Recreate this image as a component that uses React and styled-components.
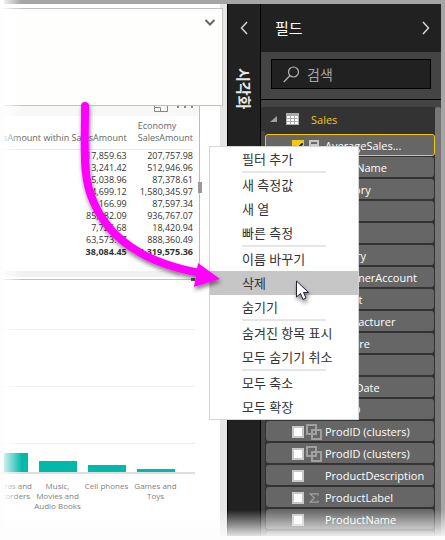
import React from "react";
import styled, { createGlobalStyle, css } from "styled-components";

const Global = createGlobalStyle`
  *, *::before, *::after { box-sizing: border-box; }
  body { margin: 0; background: #fdfdfd; font-family: "Open Sans", "Noto Sans CJK KR", sans-serif; }
  button, input { font: inherit; color: inherit; border: 0; padding: 0; margin: 0; }
  h1, h2 { margin: 0; font-weight: 400; }
`;

const Page = styled.main`
  position: relative;
  min-height: 100vh;
  padding: 0 0 4px 4px;
  overflow: hidden;
`;

const Shell = styled.div`
  display: grid;
  grid-template-columns: minmax(0, 1fr) 34px 180px;
  height: calc(100vh - 4px);
  padding: 4px 4px 0 0;
  background: #a5a5a5;
  overflow: hidden;
`;

const Canvas = styled.section`
  position: relative;
  min-width: 0;
  padding-right: 7px;
  background: #e6e6e6;
`;

const FormulaPanel = styled.div`
  position: absolute;
  z-index: 1;
  inset: 4px 4px auto 0;
  height: 98px;
  display: flex;
  justify-content: flex-end;
  align-items: flex-start;
  padding: 9px 6px;
  background: #fefffd;
  border: 1px solid #c2c2c2;
  border-left: 0;
`;

const IconButton = styled.button`
  display: grid;
  place-items: center;
  background: none;
  color: ${(p) => p.$color || "#666"};
`;

const Report = styled.div`
  height: 100%;
  padding-top: 98px;
  background: #fff;
`;

const Visual = styled.div`
  position: relative;
  display: flex;
  flex-direction: column;
  margin-right: 20px;
  height: 168px;
  border-right: 1px solid #bdbdbd;
`;

const ResizeGrip = styled.span`
  position: absolute;
  top: 80px;
  right: -3px;
  width: 4px;
  height: 11px;
  background: #999;
`;

const VisualBar = styled.div`
  display: flex;
  justify-content: flex-end;
  gap: 9px;
  height: 14px;
  padding-right: 6px;
  background: #f8f8f8;
`;

const Table = styled.table`
  align-self: flex-end;
  margin-right: 6px;
  border-collapse: collapse;
  font-size: 9px;
  line-height: 12px;
  color: #333;
  white-space: nowrap;

  th, td { padding: 0; text-align: right; font-weight: 400; }
  th { padding: 4px 0 5px; color: #666; vertical-align: bottom; border-bottom: 1px solid #e8e8e8; }
  th:last-child { text-align: left; padding-left: 11px; }
  tfoot td { font-weight: 700; }
`;

const ScrollTrack = styled.div`
  height: 6px;
  margin-right: 40px;
  margin-top: 1px;
  background: #f1f1f1;
`;

const VisualEdge = styled.div`
  display: flex;
  justify-content: flex-end;
  height: 3px;
  margin: 1px 25px 0 0;
  background: linear-gradient(#c0c0c0, #c0c0c0) no-repeat 0 1px / 100% 1px;
  &::after { content: ""; width: 4px; background: #555; }
`;

const Chart = styled.div`
  display: flex;
  flex-direction: column;
  margin-right: 25px;
`;

const Plot = styled.div`
  display: flex;
  flex-direction: column;
  padding-top: 48px;
  border-bottom: 2px solid #dedede;
`;

const GridLine = styled.div`
  height: 57px;
  border-top: 1px solid #f0f0f0;
`;

const Bars = styled.div`
  display: grid;
  grid-template-columns: 24px repeat(3, 38px);
  column-gap: 11px;
  align-items: end;
  height: 29px;
  border-top: 1px solid #ececec;
`;

const Bar = styled.div`
  background: #01b8aa;
`;

const Labels = styled.div`
  display: grid;
  grid-template-columns: 29px repeat(3, 49px);
  justify-content: start;
  padding-top: 7px;
  color: #808080;
  font-size: 8px;
  line-height: 10px;
  text-align: center;
  span { display: flex; justify-content: center; white-space: pre; }
  span:first-child { justify-content: flex-end; padding-right: 1px; }
`;

const Visualizations = styled.aside`
  display: flex;
  flex-direction: column;
  align-items: center;
  gap: 33px;
  padding-top: 17px;
  background: #212121;
  border-left: 1px solid #000;
  border-right: 1px solid #000;
  color: #e6e6e6;
`;

const SideTitle = styled.h2`
  writing-mode: vertical-rl;
  text-orientation: sideways;
  font-size: 15px;
  font-weight: 700;
  line-height: 20px;
`;

const Fields = styled.aside`
  display: flex;
  flex-direction: column;
  min-width: 0;
  min-height: 0;
  background: #444;
  color: #fff;
`;

const FieldsHead = styled.header`
  flex: none;
  display: flex;
  align-items: center;
  justify-content: space-between;
  height: 48px;
  padding: 0 11px 0 14px;
  background: #212121;
  h1 { font-size: 15px; line-height: 24px; }
`;

const SearchArea = styled.div`
  flex: none;
  padding: 7px 10px 10px;
  border-bottom: 1px solid #000;
`;

const SearchBox = styled.label`
  display: flex;
  align-items: center;
  gap: 7px;
  height: 30px;
  padding-left: 11px;
  background: #212121;
  border: 1px solid #000;
  color: #b5b5b5;
  input { flex: 1; min-width: 0; background: none; outline: 0; font-size: 14px; }
  input::placeholder { color: #a6a6a6; opacity: 1; }
`;

const ListArea = styled.div`
  flex: 1;
  display: grid;
  grid-template-columns: minmax(0, 1fr) 6px;
  min-height: 0;
  padding-top: 7px;
`;

const ListBody = styled.div`
  min-height: 0;
  overflow: hidden;
`;

const ScrollThumb = styled.div`
  background: #767676;
  border-radius: 3px 3px 0 0;
`;

const GroupRow = styled.button`
  display: flex;
  align-items: center;
  width: 100%;
  height: 24px;
  padding-left: 9px;
  background: #333;
  color: #f2c811;
  font-size: 11px;
  svg:nth-of-type(2) { margin: 0 12px 0 9px; }
`;

const FieldList = styled.ul`
  display: grid;
  gap: 2px;
  margin: 0 0 0 4px;
  padding: 3px 0 0;
  background: #333;
  list-style: none;
`;

const Field = styled.li`
  label {
    display: flex;
    align-items: center;
    height: 20px;
    margin: 0 1px;
    padding: 2px 0 0 26px;
    background: #666;
    border-radius: 3px;
    font-size: 11px;
    line-height: 18px;
    white-space: nowrap;
  }
  ${(p) => p.$selected && css`
    label { height: 22px; margin: 0 0 -1px; border: 1px solid #f2c811; }
  `}
`;

const Check = styled.input`
  appearance: none;
  flex: none;
  display: grid;
  place-items: center;
  width: 12px;
  height: 12px;
  background: #fff;
  &:not(:checked) { border: 2px solid #c8c8c8; }
  &:checked { background: #f2c811; }
  &:checked::after {
    content: "";
    width: 5px;
    height: 9px;
    margin-bottom: 2px;
    border: solid #222;
    border-width: 0 2px 2px 0;
    transform: rotate(45deg);
  }
`;

const Glyph = styled.span`
  flex: none;
  display: grid;
  place-items: center;
  width: 21px;
  padding-right: 2px;
  color: #a0a0a0;
`;

const Menu = styled.div`
  position: absolute;
  z-index: 4;
  top: 146px;
  left: 209px;
  width: 150px;
  background: #fff;
  border: 1px solid #d5d5d5;
`;

const MenuItem = styled.button`
  display: block;
  width: 100%;
  height: 24px;
  padding-left: 32px;
  background: ${(p) => (p.$active ? "#c6c6c6" : "transparent")};
  color: #333;
  font-size: 13px;
  line-height: 24px;
  text-align: left;
  white-space: nowrap;
`;

const Separator = styled.hr`
  width: 84px;
  height: 2px;
  margin: 0 0 0 32px;
  border: 0;
  background: #e6e6e6;
`;

const Annotation = styled.svg`
  position: absolute;
  z-index: 5;
  top: 0;
  left: 0;
  pointer-events: none;
`;

const BottomFade = styled.div`
  position: absolute;
  z-index: 3;
  inset: auto 0 4px 0;
  height: 26px;
  background: linear-gradient(rgba(253, 253, 253, 0), rgba(253, 253, 253, 0.88));
`;

const LeftFade = styled.div`
  position: absolute;
  z-index: 3;
  inset: 0 auto 4px 4px;
  width: 18px;
  background: linear-gradient(90deg, rgba(255, 255, 255, 0.8), rgba(255, 255, 255, 0));
`;

const rows = [
  ["17,859.63", "207,757.98"],
  ["13,241.42", "512,946.96"],
  ["5,038.96", "87,378.61"],
  ["4,699.12", "1,580,345.97"],
  ["166.99", "87,597.34"],
  ["85,182.09", "936,767.07"],
  ["7,726.68", "18,420.94"],
  ["63,573.17", "888,360.49"],
];

const fields = [
  { name: "AverageSales...", icon: "calc", selected: true },
  { name: "BrandName" },
  { name: "Category" },
  { name: "Class" },
  { name: "Color" },
  { name: "Country" },
  { name: "CustomerAccount" },
  { name: "Default" },
  { name: "Manufacturer" },
  { name: "Measure" },
  { name: "Model" },
  { name: "OrderDate" },
  { name: "ProdID" },
  { name: "ProdID (clusters)", icon: "cluster" },
  { name: "ProdID (clusters)", icon: "cluster" },
  { name: "ProductDescription" },
  { name: "ProductLabel", icon: "sum" },
  { name: "ProductName" },
  { name: "" },
];

const menu = [
  ["필터 추가"],
  ["새 측정값", "새 열", "빠른 측정"],
  ["이름 바꾸기", "삭제", "숨기기"],
  ["숨겨진 항목 표시", "모두 숨기기 취소"],
  ["모두 축소", "모두 확장"],
];

function Chevron({ d, w, h, sw = 1 }) {
  return (
    <svg width={w} height={h} viewBox={`0 0 ${w} ${h}`} fill="none" stroke="currentColor" strokeWidth={sw} aria-hidden="true">
      <path d={d} />
    </svg>
  );
}

function FieldIcon({ type }) {
  if (type === "cluster")
    return (
      <svg width="16" height="16" viewBox="0 0 16 16" fill="none" stroke="currentColor" strokeWidth="2">
        <path d="M1 1h9v9H1zM6 6h9v9H6z" />
      </svg>
    );
  if (type === "sum")
    return (
      <svg width="10" height="10" viewBox="0 0 10 10" fill="none" stroke="currentColor" strokeWidth="1.2">
        <path d="M9 2.5V.8H1.2L5.4 5 1.2 9.2H9V7.5" />
      </svg>
    );
  if (type === "calc")
    return (
      <svg width="10" height="13" viewBox="0 0 10 13">
        <path fill="#c8c8c8" d="M0 0h10v13H0z" />
        <path fill="#666" d="M2 2h6v2H2zM2 6h1.5v1.5H2zM4.3 6h1.5v1.5H4.3zM6.6 6h1.5v1.5H6.6zM2 9h1.5v1.5H2zM4.3 9h1.5v1.5H4.3zM6.6 9h1.5v1.5H6.6z" />
      </svg>
    );
  return null;
}

export default function App() {
  return (
    <Page>
      <Global />
      <Shell>
        <Canvas>
          <FormulaPanel>
            <IconButton aria-label="expand">
              <Chevron w={12} h={9} sw={2} d="M1.5 2 6 6.5 10.5 2" />
            </IconButton>
          </FormulaPanel>
          <Report>
            <Visual>
              <VisualBar>
                <svg width="15" height="11" viewBox="0 0 15 11" fill="none" stroke="#888">
                  <path d="M1.5 0v9.500h13V0M1.500 5.500h6v4" />
                </svg>
                <svg width="16" height="8" viewBox="0 0 16 8" fill="#888">
                  <path d="M0 4h2v2H0zM7 4h2v2H7zM14 4h2v2h-2z" />
                </svg>
              </VisualBar>
              <Table>
                <thead>
                  <tr>
                    <th>esAmount within SalesAmount</th>
                    <th>Economy<br />SalesAmount</th>
                  </tr>
                </thead>
                <tbody>
                  {rows.map(([a, b]) => (
                    <tr key={b}><td>{a}</td><td>{b}</td></tr>
                  ))}
                </tbody>
                <tfoot>
                  <tr><td>38,084.45</td><td>4,319,575.36</td></tr>
                </tfoot>
              </Table>
              <ResizeGrip />
            </Visual>
            <ScrollTrack />
            <VisualEdge />
            <Chart>
              <Plot>
                <GridLine /><GridLine />
                <Bars>
                  {[19, 11, 7, 3].map((h) => <Bar key={h} style={{ height: h }} />)}
                </Bars>
              </Plot>
              <Labels>
                <span>{"eras and\ncorders"}</span>
                <span>{"Music,\nMovies and\nAudio Books"}</span>
                <span>Cell phones</span>
                <span>{"Games and\nToys"}</span>
              </Labels>
            </Chart>
          </Report>
        </Canvas>
        <Visualizations>
          <IconButton $color="#dcdcdc" aria-label="시각화 열기">
            <Chevron w={8} h={14} sw={1.4} d="M7 1 1.500 7 7 13" />
          </IconButton>
          <SideTitle>시각화</SideTitle>
        </Visualizations>
        <Fields>
          <FieldsHead>
            <h1>필드</h1>
            <IconButton $color="#dcdcdc" aria-label="필드 접기">
              <Chevron w={8} h={14} sw={1.4} d="M1 1 6.500 7 1 13" />
            </IconButton>
          </FieldsHead>
          <SearchArea>
            <SearchBox>
              <svg width="17" height="17" viewBox="0 0 17 17" fill="none" stroke="currentColor" strokeWidth="1.2" aria-hidden="true">
                <circle cx="10.500" cy="6" r="5" />
                <path d="M7 9.500.8 16" />
              </svg>
              <input type="text" placeholder="검색" aria-label="검색" />
            </SearchBox>
          </SearchArea>
          <ListArea>
            <ListBody>
              <GroupRow>
                <svg width="7" height="6" viewBox="0 0 7 6" fill="#a0a0a0"><path d="M7 0v6H0z" /></svg>
                <svg width="13" height="12" viewBox="0 0 13 12">
                  <path fill="#aaa" d="M0 0h13v12H0z" />
                  <path fill="#fff" d="M1 3h3v2H1zM5 3h3v2H5zM9 3h3v2H9zM1 6h3v2H1zM5 6h3v2H5zM9 6h3v2H9zM1 9h3v2H1zM5 9h3v2H5zM9 9h3v2H9z" />
                </svg>
                Sales
              </GroupRow>
              <FieldList>
                {fields.map((f, i) => (
                  <Field key={i} $selected={f.selected}>
                    <label>
                      <Check type="checkbox" defaultChecked={f.selected} />
                      <Glyph><FieldIcon type={f.icon} /></Glyph>
                      {f.name}
                    </label>
                  </Field>
                ))}
              </FieldList>
            </ListBody>
            <ScrollThumb />
          </ListArea>
        </Fields>
      </Shell>
      <LeftFade />
      <BottomFade />
      <Menu role="menu">
        {menu.map((group, g) => (
          <React.Fragment key={g}>
            {g > 0 && <Separator />}
            {group.map((t) => <MenuItem key={t} role="menuitem" $active={t === "삭제"}>{t}</MenuItem>)}
          </React.Fragment>
        ))}
      </Menu>
      <Annotation width="445" height="320" viewBox="0 0 445 320" aria-hidden="true">
        <defs>
          <filter id="shadow" x="-20%" y="-20%" width="140%" height="140%">
            <feDropShadow dx="1" dy="3" stdDeviation="2" floodOpacity="0.5" />
          </filter>
        </defs>
        <g filter="url(#shadow)">
          <path d="M85 106C85 150 82 178 94 203C110 240 145 263 200 273" fill="none" stroke="#f0f" strokeWidth="8" strokeLinecap="round" />
          <path d="M198 263 220 279 194 287Z" fill="#f0f" />
          <path d="M296.500 281v16l4-3.500 2.500 6 3-1.500-2.500-5.500h5z" fill="#fff" stroke="#223" />
        </g>
      </Annotation>
    </Page>
  );
}
